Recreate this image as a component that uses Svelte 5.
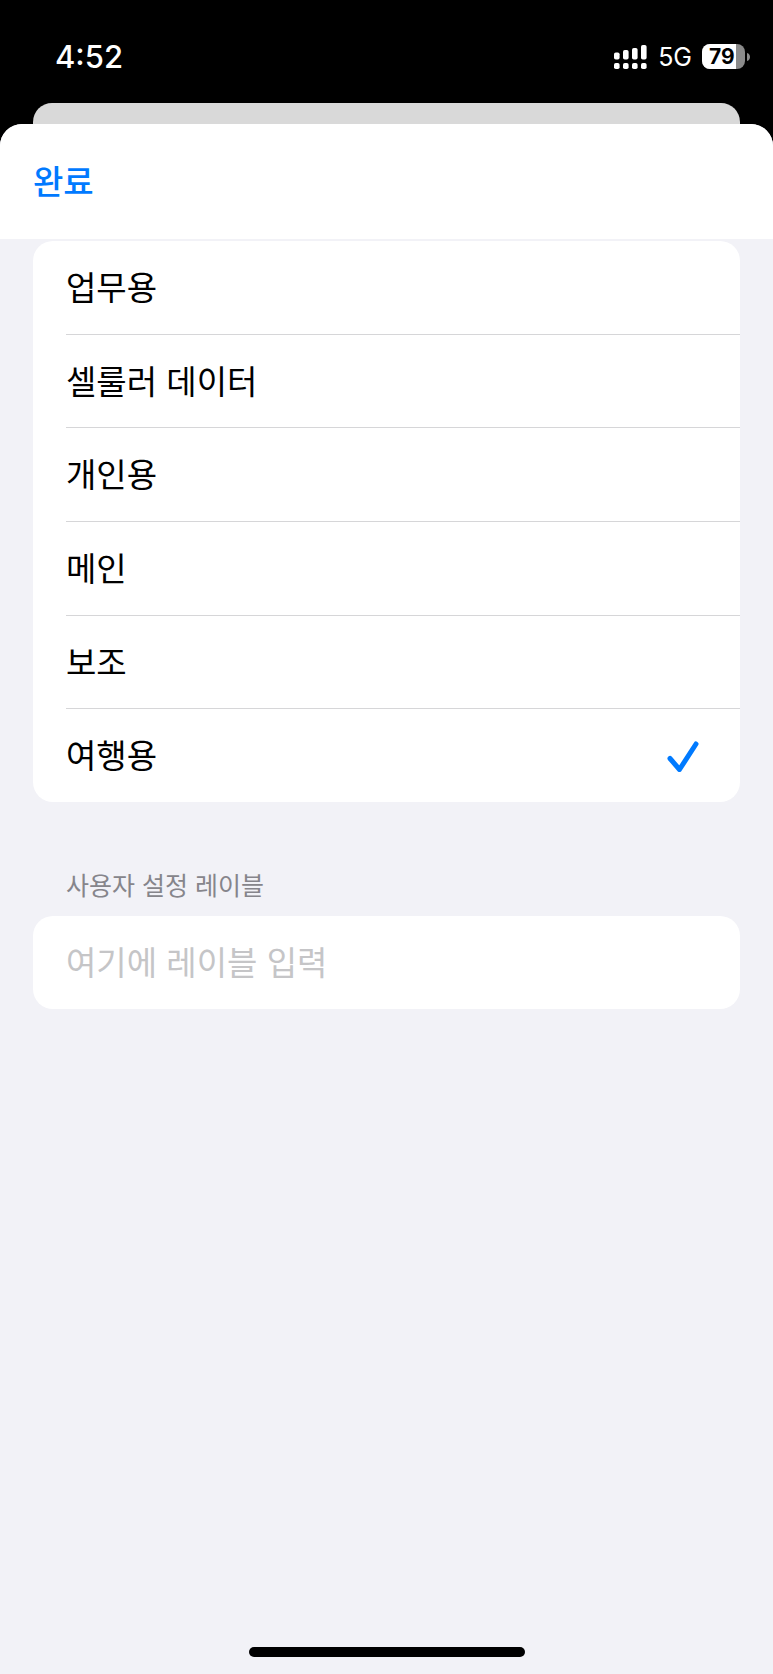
<script lang="ts">
  const labels = ['업무용', '셀룰러 데이터', '개인용', '메인', '보조', '여행용'];
  const batteryLevel = 79;

  let selected = $state('여행용');
  let customLabel = $state('');
</script>

<div class="screen">
  <header class="status-bar">
    <time>4:52</time>
    <div class="indicators">
      <svg class="signal" width="33" height="24" viewBox="0 0 33 24" fill="white" aria-hidden="true">
        <rect x="0" y="7.5" width="5.6" height="7" rx="1.8" />
        <rect x="9" y="5" width="5.6" height="9.5" rx="1.8" />
        <rect x="18" y="3" width="5.6" height="11.5" rx="1.8" />
        <rect x="27" y="0" width="5.6" height="14.5" rx="1.8" />
        <rect x="0" y="18" width="5.6" height="6" rx="1.8" />
        <rect x="9" y="18" width="5.6" height="6" rx="1.8" />
        <rect x="18" y="18" width="5.6" height="6" rx="1.8" />
        <rect x="27" y="18" width="5.6" height="6" rx="1.8" />
      </svg>
      <span class="network">5G</span>
      <div class="battery">
        <div class="level" style:width="{batteryLevel}%"></div>
        <span class="percent">{batteryLevel}</span>
        <svg class="cap" width="3" height="8" viewBox="0 0 3 8" aria-hidden="true">
          <path d="M0 0C4 1 4 7 0 8Z" fill="#8a8a8a" />
        </svg>
      </div>
    </div>
  </header>

  <div class="back-sheet"></div>

  <main class="sheet">
    <nav class="toolbar">
      <button type="button" class="done">완료</button>
    </nav>

    <div class="content">
      <ul class="card options">
        {#each labels as label}
          <li>
            <button
              type="button"
              class="option"
              aria-pressed={selected === label}
              onclick={() => (selected = label)}
            >
              <span>{label}</span>
              {#if selected === label}
                <svg width="32" height="32" viewBox="0 0 32 32" fill="none" aria-hidden="true">
                  <path
                    d="M3 18.5L12.5 29.5L29 4"
                    stroke="#007aff"
                    stroke-width="5"
                    stroke-linecap="round"
                    stroke-linejoin="round"
                  />
                </svg>
              {/if}
            </button>
          </li>
        {/each}
      </ul>

      <label class="section-title" for="custom-label">사용자 설정 레이블</label>
      <input
        id="custom-label"
        class="card custom"
        type="text"
        placeholder="여기에 레이블 입력"
        bind:value={customLabel}
      />
    </div>

    <div class="home-indicator"></div>
  </main>
</div>

<style>
  :global(body) {
    background: #000;
  }

  .screen {
    display: flex;
    flex-direction: column;
    min-height: 100vh;
    background: #000;
    font-family: Inter, 'Noto Sans CJK KR', sans-serif;
    font-size: 33px;
    color: #000;
  }

  .status-bar {
    display: flex;
    align-items: center;
    justify-content: space-between;
    height: 103px;
    padding: 10px 24px 0 55px;
    box-sizing: border-box;
    color: #fff;
  }

  time {
    font-size: 31px;
    font-weight: 500;
  }

  .indicators {
    display: flex;
    align-items: center;
  }

  .network {
    margin: 2px 10px 0 11px;
    font-size: 25px;
    line-height: 25px;
  }

  .battery {
    position: relative;
    display: flex;
    align-items: center;
    width: 43px;
    height: 25px;
    margin-right: 4px;
    padding-left: 7px;
    box-sizing: border-box;
    border-radius: 8px;
    background: #8a8a8a;
  }

  .level {
    position: absolute;
    inset: 0 auto 0 0;
    border-radius: 8px 0 0 8px;
    background: #fff;
  }

  .percent {
    position: relative;
    font-size: 21px;
    line-height: 25px;
    font-weight: 700;
    color: #000;
  }

  .cap {
    position: absolute;
    top: 9px;
    right: -5px;
  }

  .back-sheet {
    height: 40px;
    margin: 0 33px -19px;
    border-radius: 19px 19px 0 0;
    background: #d9d9d9;
  }

  .sheet {
    position: relative;
    flex: 1;
    display: flex;
    flex-direction: column;
    border-radius: 22px 22px 0 0;
    overflow: hidden;
    background: #f2f2f7;
  }

  .toolbar {
    display: flex;
    align-items: center;
    height: 115px;
    padding: 0 33px 4px;
    box-sizing: border-box;
    background: #fff;
  }

  button {
    border: none;
    padding: 0;
    background: transparent;
    color: inherit;
    font: inherit;
    cursor: pointer;
  }

  .done {
    color: #007aff;
    font-weight: 500;
  }

  .content {
    flex: 1;
    display: flex;
    flex-direction: column;
    padding: 2px 33px 0;
  }

  .card {
    border-radius: 20px;
    background: #fff;
  }

  .options {
    display: flex;
    flex-direction: column;
    min-height: 561px;
    margin: 0;
    padding: 0 0 0 33px;
    list-style: none;
  }

  .options li {
    flex: 1;
    display: flex;
  }

  .options li + li {
    border-top: 1px solid #d6d6d8;
  }

  .option {
    flex: 1;
    display: flex;
    align-items: center;
    justify-content: space-between;
    padding-right: 41px;
    text-align: left;
  }

  .option span {
    padding-bottom: 3px;
  }

  .section-title {
    margin: 65px 33px 11px;
    font-size: 25px;
    line-height: 38px;
    color: #86858b;
  }

  .custom {
    width: 100%;
    height: 93px;
    padding: 0 33px;
    border: none;
    box-sizing: border-box;
    color: inherit;
    font: inherit;
    outline: none;
  }

  .custom::placeholder {
    color: #c5c5c7;
    opacity: 1;
  }

  .home-indicator {
    align-self: center;
    width: 276px;
    height: 10px;
    margin-bottom: 17px;
    border-radius: 5px;
    background: #000;
  }
</style>
